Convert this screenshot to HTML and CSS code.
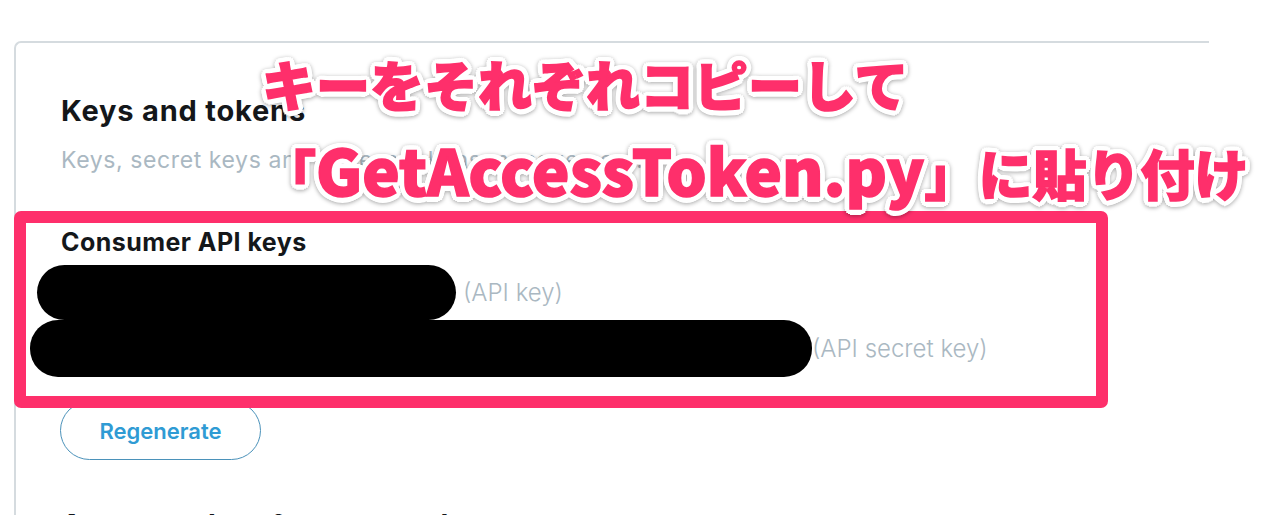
FILE: index.html
```html
<!DOCTYPE html>
<html lang="ja">
<head>
<meta charset="utf-8">
<title>Keys and tokens</title>
<link rel="stylesheet" href="styles.css">
</head>
<body>
<div class="page">
  <section class="card">
    <h2 class="title">Keys and tokens</h2>
    <p class="subtitle">Keys, secret keys and access tokens management.</p>
    <h3 class="section-title">Consumer API keys</h3>
    <div class="key-row key-row-1">
      <span class="redact redact-1"></span>
      <span class="key-label">(API key)</span>
    </div>
    <div class="key-row key-row-2">
      <span class="redact redact-2"></span>
      <span class="key-label">(API secret key)</span>
    </div>
    <button class="btn-outline" type="button">Regenerate</button>
    <h2 class="title title-next">Access token &amp; access token secret</h2>
    <div class="highlight-frame"></div>
  </section>
  <div class="annotation">
    <div class="note-line">キーをそれぞれコピーして</div>
    <div class="note-line">「<span class="note-latin">GetAccessToken.py</span>」に貼り付け</div>
  </div>
</div>
</body>
</html>
```

FILE: styles.css
```css
html, body {
  margin: 0;
  padding: 0;
  background: #ffffff;
  overflow: hidden;
}

.page {
  position: relative;
  padding: 41px 0 0 14px;
  font-family: "Inter", "Liberation Sans", sans-serif;
}

.card {
  position: relative;
  width: 1195px;
  box-sizing: border-box;
  border-top: 2px solid #d5dbdf;
  border-left: 2px solid #d5dbdf;
  border-top-left-radius: 7px;
  padding: 50px 0 0 45px;
  display: flex;
  flex-direction: column;
  align-items: flex-start;
}

.title {
  margin: 0;
  font-size: 29px;
  line-height: 36px;
  font-weight: 700;
  letter-spacing: 0.8px;
  color: #14171a;
}

.subtitle {
  margin: 17px 0 0;
  font-size: 23px;
  line-height: 28px;
  font-weight: 400;
  letter-spacing: 0.6px;
  color: #aab8c2;
}

.section-title {
  margin: 53px 0 0;
  font-size: 25px;
  line-height: 30px;
  font-weight: 700;
  letter-spacing: 0.45px;
  color: #14171a;
}

.key-row {
  display: flex;
  align-items: center;
}

.key-row-1 {
  margin-top: 8px;
  height: 55px;
}

.key-row-2 {
  height: 57px;
}

.redact {
  display: block;
  background: #000000;
  border-radius: 28px;
}

.redact-1 {
  width: 419px;
  height: 55px;
  margin-left: -24px;
}

.redact-2 {
  width: 782px;
  height: 57px;
  margin-left: -31px;
}

.key-label {
  font-size: 24px;
  font-weight: 300;
  color: #aab8c2;
}

.key-row-1 .key-label {
  margin-left: 7px;
}

.key-row-2 .key-label {
  margin-left: 0;
}

.btn-outline {
  margin: 24px 0 0 -1px;
  width: 201px;
  height: 59px;
  box-sizing: border-box;
  border: 1.5px solid #4b92ba;
  border-radius: 30px;
  background: #ffffff;
  color: #2f9bd4;
  font-family: "Inter", "Liberation Sans", sans-serif;
  font-size: 22px;
  font-weight: 600;
  padding: 0;
}

.title-next {
  margin-top: 47px;
}

.highlight-frame {
  position: absolute;
  left: -2px;
  top: 168px;
  width: 1094px;
  height: 197px;
  box-sizing: border-box;
  border: 12px solid #fe2f6b;
  border-radius: 7px;
}

.annotation {
  position: absolute;
  left: 262px;
  top: 57px;
  font-family: "Noto Sans CJK JP", "Noto Sans CJK SC", sans-serif;
  font-weight: 900;
  font-size: 54px;
  line-height: 54px;
  color: #fe2f6b;
  -webkit-text-stroke: 1.6px #fe2f6b;
  white-space: nowrap;
  filter: drop-shadow(0 1px 2px rgba(0, 0, 0, 0.35));
  text-shadow:
    5.5px 0 0 #fff, -5.5px 0 0 #fff, 0 5.5px 0 #fff, 0 -5.5px 0 #fff,
    3.9px 3.9px 0 #fff, -3.9px 3.9px 0 #fff, 3.9px -3.9px 0 #fff, -3.9px -3.9px 0 #fff,
    5px 2.1px 0 #fff, -5px 2.1px 0 #fff, 5px -2.1px 0 #fff, -5px -2.1px 0 #fff,
    2.1px 5px 0 #fff, -2.1px 5px 0 #fff, 2.1px -5px 0 #fff, -2.1px -5px 0 #fff;
}

.note-line + .note-line {
  margin-top: 31px;
}

.note-latin {
  font-size: 63px;
}
```
